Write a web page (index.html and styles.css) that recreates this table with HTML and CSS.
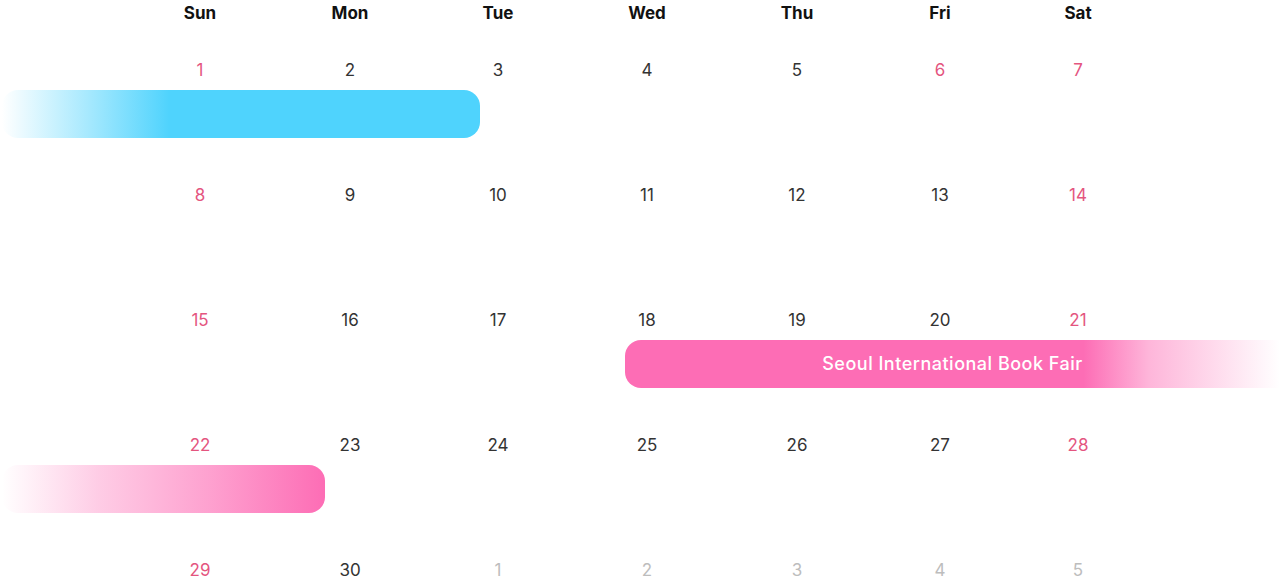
FILE: index.html
```html
<!DOCTYPE html>
<html>
<head>
<meta charset="utf-8">
<link rel="stylesheet" href="styles.css">
</head>
<body>
<div class="calendar">
  <div class="grid head">
    <div>Sun</div><div>Mon</div><div>Tue</div><div>Wed</div><div>Thu</div><div>Fri</div><div>Sat</div>
  </div>
  <div class="week">
    <div class="grid days">
      <div class="wkend">1</div><div>2</div><div>3</div><div>4</div><div>5</div><div class="wkend">6</div><div class="wkend">7</div>
    </div>
    <div class="bar bar-blue"></div>
  </div>
  <div class="week">
    <div class="grid days">
      <div class="wkend">8</div><div>9</div><div>10</div><div>11</div><div>12</div><div>13</div><div class="wkend">14</div>
    </div>
  </div>
  <div class="week">
    <div class="grid days">
      <div class="wkend">15</div><div>16</div><div>17</div><div>18</div><div>19</div><div>20</div><div class="wkend">21</div>
    </div>
    <div class="bar bar-pink">Seoul International Book Fair</div>
  </div>
  <div class="week">
    <div class="grid days">
      <div class="wkend">22</div><div>23</div><div>24</div><div>25</div><div>26</div><div>27</div><div class="wkend">28</div>
    </div>
    <div class="bar bar-pink-in"></div>
  </div>
  <div class="week">
    <div class="grid days">
      <div class="wkend">29</div><div>30</div><div class="muted">1</div><div class="muted">2</div><div class="muted">3</div><div class="muted">4</div><div class="muted">5</div>
    </div>
  </div>
</div>
</body>
</html>
```
FILE: styles.css
```css
html, body {
  margin: 0;
  padding: 0;
  background: #fff;
  overflow: hidden;
}
body {
  font-family: Inter, "Noto Sans", sans-serif;
  color: #333;
}
.calendar {
  width: 1280px;
  padding-top: 1px;
}
.grid {
  display: grid;
  grid-template-columns: 150px 150px 146px 152px 148px 138px 138px;
  padding-left: 125px;
  text-align: center;
}
.head {
  height: 24px;
  line-height: 24px;
  font-weight: 700;
  font-size: 17px;
  color: #111;
}
.week {
  position: relative;
  height: 125px;
  box-sizing: border-box;
  padding-top: 33px;
}
.days {
  line-height: 24px;
  font-size: 17px;
  color: #333;
}
.days .wkend {
  color: #e4557f;
}
.days .muted {
  color: #bdbdbd;
}
.bar {
  position: absolute;
  top: 65px;
  height: 48px;
  border-radius: 16px;
  color: #fff;
  font-size: 18px;
  font-weight: 500;
  letter-spacing: 0.5px;
  line-height: 48px;
  text-align: center;
}
.bar-blue {
  left: 2px;
  width: 478px;
  background: linear-gradient(to right, rgba(79, 211, 253, 0) 0%, rgba(79, 211, 253, 0.5) 18%, #4fd3fd 35%, #4fd3fd 100%);
}
.bar-pink {
  left: 625px;
  width: 655px;
  border-radius: 16px 0 0 16px;
  background: linear-gradient(to right, #fd6db5 0%, #fd6db5 70%, rgba(253, 109, 181, 0.5) 80%, rgba(253, 109, 181, 0) 100%);
}
.bar-pink-in {
  left: 2px;
  width: 323px;
  background: linear-gradient(to right, rgba(253, 109, 181, 0) 0%, rgba(253, 109, 181, 0.35) 30%, rgba(253, 109, 181, 0.65) 65%, #fd6db5 100%);
}
```
